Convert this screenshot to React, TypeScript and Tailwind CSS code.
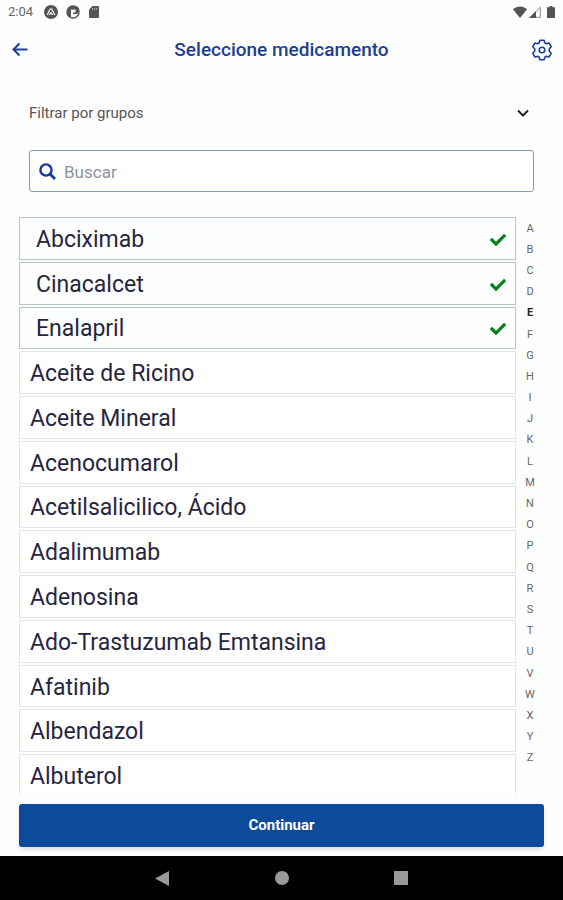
import React from "react";

const medicines = [
  { name: "Abciximab", selected: true },
  { name: "Cinacalcet", selected: true },
  { name: "Enalapril", selected: true },
  { name: "Aceite de Ricino" },
  { name: "Aceite Mineral" },
  { name: "Acenocumarol" },
  { name: "Acetilsalicilico, Ácido" },
  { name: "Adalimumab" },
  { name: "Adenosina" },
  { name: "Ado-Trastuzumab Emtansina" },
  { name: "Afatinib" },
  { name: "Albendazol" },
  { name: "Albuterol" },
];

const letters = "ABCDEFGHIJKLMNOPQRSTUVWXYZ".split("");

function StatusBar() {
  return (
    <div className="flex h-6 shrink-0 items-center justify-between px-2 text-[#666]">
      <div className="flex items-center gap-2">
        <span className="w-7 text-[13px] leading-6">2:04</span>
        <svg className="size-[14px]" viewBox="0 0 14 14" aria-hidden="true">
          <circle cx="7" cy="7" r="7" fill="#555" />
          <path d="M3.2 9.8 C5 7.500 5.600 3.600 7 3.600 S9 7.500 10.800 9.800 M5.300 9.800 L7 7.600 L8.700 9.800" fill="none" stroke="#eee" strokeWidth="1.300" />
        </svg>
        <svg className="size-[14px]" viewBox="0 0 14 14" aria-hidden="true">
          <circle cx="7" cy="7" r="6" fill="#fff" stroke="#555" strokeWidth="1.400" />
          <path d="M7 1A6 6 0 0 0 5 12.700V4.500h2z" fill="#555" />
          <path d="M6 1h3a4 4 0 0 1 4 5.500L11 9H7V7.500h2.500V4.500H6z" fill="#555" />
        </svg>
        <svg className="h-[14px] w-3" viewBox="0 0 12 14" aria-hidden="true">
          <path d="M4.500 1H10a1 1 0 0 1 1 1v10a1 1 0 0 1-1 1H2a1 1 0 0 1-1-1V4.500z" fill="#555" />
          <path d="M4.500 3v2M6.500 3v2M8.500 3v2" stroke="#aaa" strokeWidth="1" />
        </svg>
      </div>
      <div className="flex items-center">
        <svg className="h-3 w-[14px]" viewBox="0 0 14 12" aria-hidden="true">
          <path d="M0 3.200C4-.300 10-.300 14 3.200L7 12z" fill="#555" />
        </svg>
        <svg className="ml-[2px] h-3 w-3" viewBox="0 0 12 12" aria-hidden="true">
          <path d="M1.500 11.300H11.300V1.300z" fill="none" stroke="#888" />
          <path d="M0 12H7V5z" fill="#555" />
        </svg>
        <svg className="ml-[6px] h-3 w-2" viewBox="0 0 8 12" aria-hidden="true">
          <path d="M2.500 0h3v1.200H8V12H0V1.200h2.500z" fill="#555" />
        </svg>
      </div>
    </div>
  );
}

function Check() {
  return (
    <svg className="h-4 w-4 shrink-0" viewBox="0 0 512 512" fill="#078018" aria-hidden="true">
      <path d="M173.900 439.400l-166.400-166.400c-10-10-10-26.200 0-36.200l36.200-36.200c10-10 26.200-10 36.200 0L192 312.700 432.100 72.600c10-10 26.200-10 36.200 0l36.200 36.200c10 10 10 26.200 0 36.200l-294.400 294.400c-10 10-26.200 10-36.200 0z" />
    </svg>
  );
}

function MedicineRow({ name, selected }: { name: string; selected?: boolean }) {
  return (
    <li className="min-h-0">
      <button
        type="button"
        aria-pressed={!!selected}
        className={
          selected
            ? "flex h-full w-full items-center justify-between border border-[#b4c8b8] bg-[#fdfffe] pt-[3px] pr-[9px] pl-4 text-left"
            : "flex h-full w-full items-center justify-between border border-[#e4e4e4] bg-white px-[10px] pt-[3px] text-left"
        }
      >
        <span className="text-[23px] leading-7 text-[#26253f]">{name}</span>
        {selected && <Check />}
      </button>
    </li>
  );
}

export default function App() {
  return (
    <div className="flex h-screen flex-col overflow-hidden bg-[#fefefe] font-[Roboto,sans-serif]">
      <StatusBar />
      <header className="flex h-[51px] shrink-0 items-center justify-between px-[10px] text-[#1b3f94]">
        <button type="button" aria-label="Volver" className="flex size-[22px] items-center justify-center">
          <svg className="size-5" viewBox="0 0 20 20" fill="none" stroke="currentColor" strokeWidth="2" aria-hidden="true">
            <path d="M16.500 9.500H3M8.500 3.500L2.500 9.500l6 6" />
          </svg>
        </button>
        <h1 className="text-[19px] leading-6 font-medium">Seleccione medicamento</h1>
        <button type="button" aria-label="Ajustes" className="flex size-[22px] items-center justify-center">
          <svg className="size-[22px]" viewBox="0 0 22 22" fill="none" stroke="currentColor" strokeWidth="1.600" strokeLinejoin="round" aria-hidden="true">
            <path d="M8.900 1.200h4.200l.7 2.600 1.500.9 2.700-.7 2.200 3.700-1.900 2v2.600l1.900 2-2.200 3.700-2.700-.7-1.500.9-.7 2.600H8.900l-.7-2.600-1.500-.9-2.700.7-2.200-3.700 1.900-2V9.700l-1.900-2L4 4l2.700.7 1.500-.9z" />
            <circle cx="11" cy="11" r="2.800" />
          </svg>
        </button>
      </header>

      <main className="flex min-h-0 flex-1 flex-col px-[19px] pt-[18px]">
        <div className="relative mx-[10px] shrink-0">
          <select aria-label="Filtrar por grupos" className="h-10 w-full appearance-none bg-transparent text-[15px] text-[#555] outline-none">
            <option>Filtrar por grupos</option>
          </select>
          <svg className="pointer-events-none absolute top-[14px] right-[5px] size-3" viewBox="0 0 12 12" fill="none" stroke="#222" strokeWidth="2" aria-hidden="true">
            <path d="M1 3.500l5 5 5-5" />
          </svg>
        </div>

        <label className="mx-[10px] mt-[17px] flex h-[42px] shrink-0 items-center rounded-[3px] border border-[#8299c8] bg-white px-[9px] pt-px">
          <svg className="size-[17px] shrink-0" viewBox="0 0 17 17" fill="none" stroke="#14389b" aria-hidden="true">
            <circle cx="7" cy="7" r="5.600" strokeWidth="2.400" />
            <path d="M11 11l5 5" strokeWidth="2.800" />
          </svg>
          <input
            type="search"
            aria-label="Buscar"
            placeholder="Buscar"
            className="ml-2 w-full min-w-0 bg-transparent text-[17px] leading-6 outline-none placeholder:text-[#8a939c]"
          />
        </label>

        <div className="mt-[25px] flex min-h-0 flex-1 overflow-hidden">
          <ul className="grid h-[580px] min-w-0 flex-1 auto-rows-fr gap-[2px]">
            {medicines.map((m) => (
              <MedicineRow key={m.name} name={m.name} selected={m.selected} />
            ))}
          </ul>
          <nav aria-label="Índice alfabético" className="flex h-[552px] w-7 flex-col pt-px">
            {letters.map((l) => (
              <a
                key={l}
                href={"#" + l}
                className={
                  l === "E"
                    ? "flex min-h-0 flex-1 items-center justify-center text-[11px] leading-5 font-bold text-[#222]"
                    : "flex min-h-0 flex-1 items-center justify-center text-[11px] leading-5 text-[#666]"
                }
              >
                {l}
              </a>
            ))}
          </nav>
        </div>

        <button
          type="button"
          className="mt-[10px] mb-[9px] h-[43px] shrink-0 rounded-[3px] bg-[#0d4a9c] text-[15px] font-bold text-white shadow-md"
        >
          Continuar
        </button>
      </main>

      <div className="flex h-11 shrink-0 items-center justify-center gap-[105px] bg-black">
        <button type="button" aria-label="Atrás">
          <svg className="size-[15px]" viewBox="0 0 15 15" aria-hidden="true">
            <path d="M0 7.500L14 0v15z" fill="#999" />
          </svg>
        </button>
        <button type="button" aria-label="Inicio">
          <svg className="size-[14px]" viewBox="0 0 14 14" aria-hidden="true">
            <circle cx="7" cy="7" r="7" fill="#999" />
          </svg>
        </button>
        <button type="button" aria-label="Recientes">
          <svg className="size-[14px]" viewBox="0 0 14 14" aria-hidden="true">
            <rect width="14" height="14" fill="#999" />
          </svg>
        </button>
      </div>
    </div>
  );
}
